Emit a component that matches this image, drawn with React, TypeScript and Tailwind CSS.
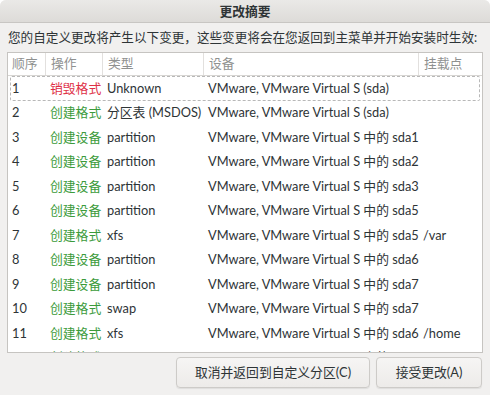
import React from "react";

const rows = [
  { n: "1", op: "销毁格式", destroy: true, type: "Unknown", dev: "VMware, VMware Virtual S (sda)", mount: "" },
  { n: "2", op: "创建格式", type: "分区表 (MSDOS)", dev: "VMware, VMware Virtual S (sda)", mount: "" },
  { n: "3", op: "创建设备", type: "partition", dev: "VMware, VMware Virtual S 中的 sda1", mount: "" },
  { n: "4", op: "创建设备", type: "partition", dev: "VMware, VMware Virtual S 中的 sda2", mount: "" },
  { n: "5", op: "创建设备", type: "partition", dev: "VMware, VMware Virtual S 中的 sda3", mount: "" },
  { n: "6", op: "创建设备", type: "partition", dev: "VMware, VMware Virtual S 中的 sda5", mount: "" },
  { n: "7", op: "创建格式", type: "xfs", dev: "VMware, VMware Virtual S 中的 sda5", mount: "/var" },
  { n: "8", op: "创建设备", type: "partition", dev: "VMware, VMware Virtual S 中的 sda6", mount: "" },
  { n: "9", op: "创建设备", type: "partition", dev: "VMware, VMware Virtual S 中的 sda7", mount: "" },
  { n: "10", op: "创建格式", type: "swap", dev: "VMware, VMware Virtual S 中的 sda7", mount: "" },
  { n: "11", op: "创建格式", type: "xfs", dev: "VMware, VMware Virtual S 中的 sda6", mount: "/home" },
  { n: "12", op: "创建格式", type: "xfs", dev: "VMware, VMware Virtual S 中的 sda3", mount: "/" },
];

const font = { fontFamily: 'Lato, "Noto Sans CJK SC", sans-serif' };

export default function App() {
  return (
    <div className="w-[490px] h-[395px] bg-[#f1f0ef] text-[#2e3436] text-[12.8px] flex flex-col overflow-hidden rounded-t-[6px]" style={font}>
      {/* Title bar */}
      <div className="h-[23px] shrink-0 flex items-center justify-center bg-gradient-to-b from-[#eae9e7] to-[#dddbd8] border-b border-[#c8c6c3]">
        <span className="text-[12.8px] font-bold text-[#2e3436] leading-none">更改摘要</span>
      </div>

      <div className="px-[8px] pt-[5px] text-[12.6px] leading-[20px] text-[#2e3436] whitespace-nowrap">
        您的自定义更改将产生以下变更，这些变更将会在您返回到主菜单并开始安装时生效:
      </div>

      {/* Table */}
      <div className="mx-[7px] mt-[4px] h-[301px] shrink-0 bg-white border border-[#c6c4c1] overflow-hidden">
        <div className="h-[23px] flex items-stretch border-b border-[#d8d6d3] text-[#8f9190] bg-white">
          <div className="w-[38px] pl-[4px] flex items-center border-r border-[#e2e0de]">顺序</div>
          <div className="w-[57px] pl-[5px] flex items-center border-r border-[#e2e0de]">操作</div>
          <div className="w-[101px] pl-[5px] flex items-center border-r border-[#e2e0de]">类型</div>
          <div className="w-[215px] pl-[5px] flex items-center border-r border-[#e2e0de]">设备</div>
          <div className="flex-1 pl-[5px] flex items-center">挂载点</div>
        </div>
        {rows.map((r, i) => (
          <div
            key={i}
            className={
              "h-[24.5px] flex items-center whitespace-nowrap mx-[2px] border " +
              (i === 0 ? "border-dashed border-[#b8b8b8] rounded-[2px]" : "border-transparent")
            }
          >
            <div className="w-[37px] pl-[1px] text-[#2e3436]">{r.n}</div>
            <div className={"w-[57px] pl-[2px] " + (r.destroy ? "text-[#de3046]" : "text-[#3b9b3b]")}>{r.op}</div>
            <div className="w-[101px] pl-[2px] text-[#2e3436]">{r.type}</div>
            <div className="w-[215px] pl-[2px] text-[#2e3436] overflow-hidden">{r.dev}</div>
            <div className="flex-1 pl-[2px] text-[#2e3436]">{r.mount}</div>
          </div>
        ))}
      </div>

      {/* Buttons */}
      <div className="flex justify-end gap-[6px] px-[8px] pt-[4px]">
        <button className="w-[194px] h-[31px] rounded-[4px] border border-[#cdcbc8] bg-gradient-to-b from-[#f6f5f4] to-[#edebe9] text-[#2e3436] shadow-[0_1px_1px_rgba(0,0,0,0.08)]">
          取消并返回到自定义分区(C)
        </button>
        <button className="w-[106px] h-[31px] rounded-[4px] border border-[#cdcbc8] bg-gradient-to-b from-[#f6f5f4] to-[#edebe9] text-[#2e3436] shadow-[0_1px_1px_rgba(0,0,0,0.08)]">
          接受更改(A)
        </button>
      </div>
    </div>
  );
}
